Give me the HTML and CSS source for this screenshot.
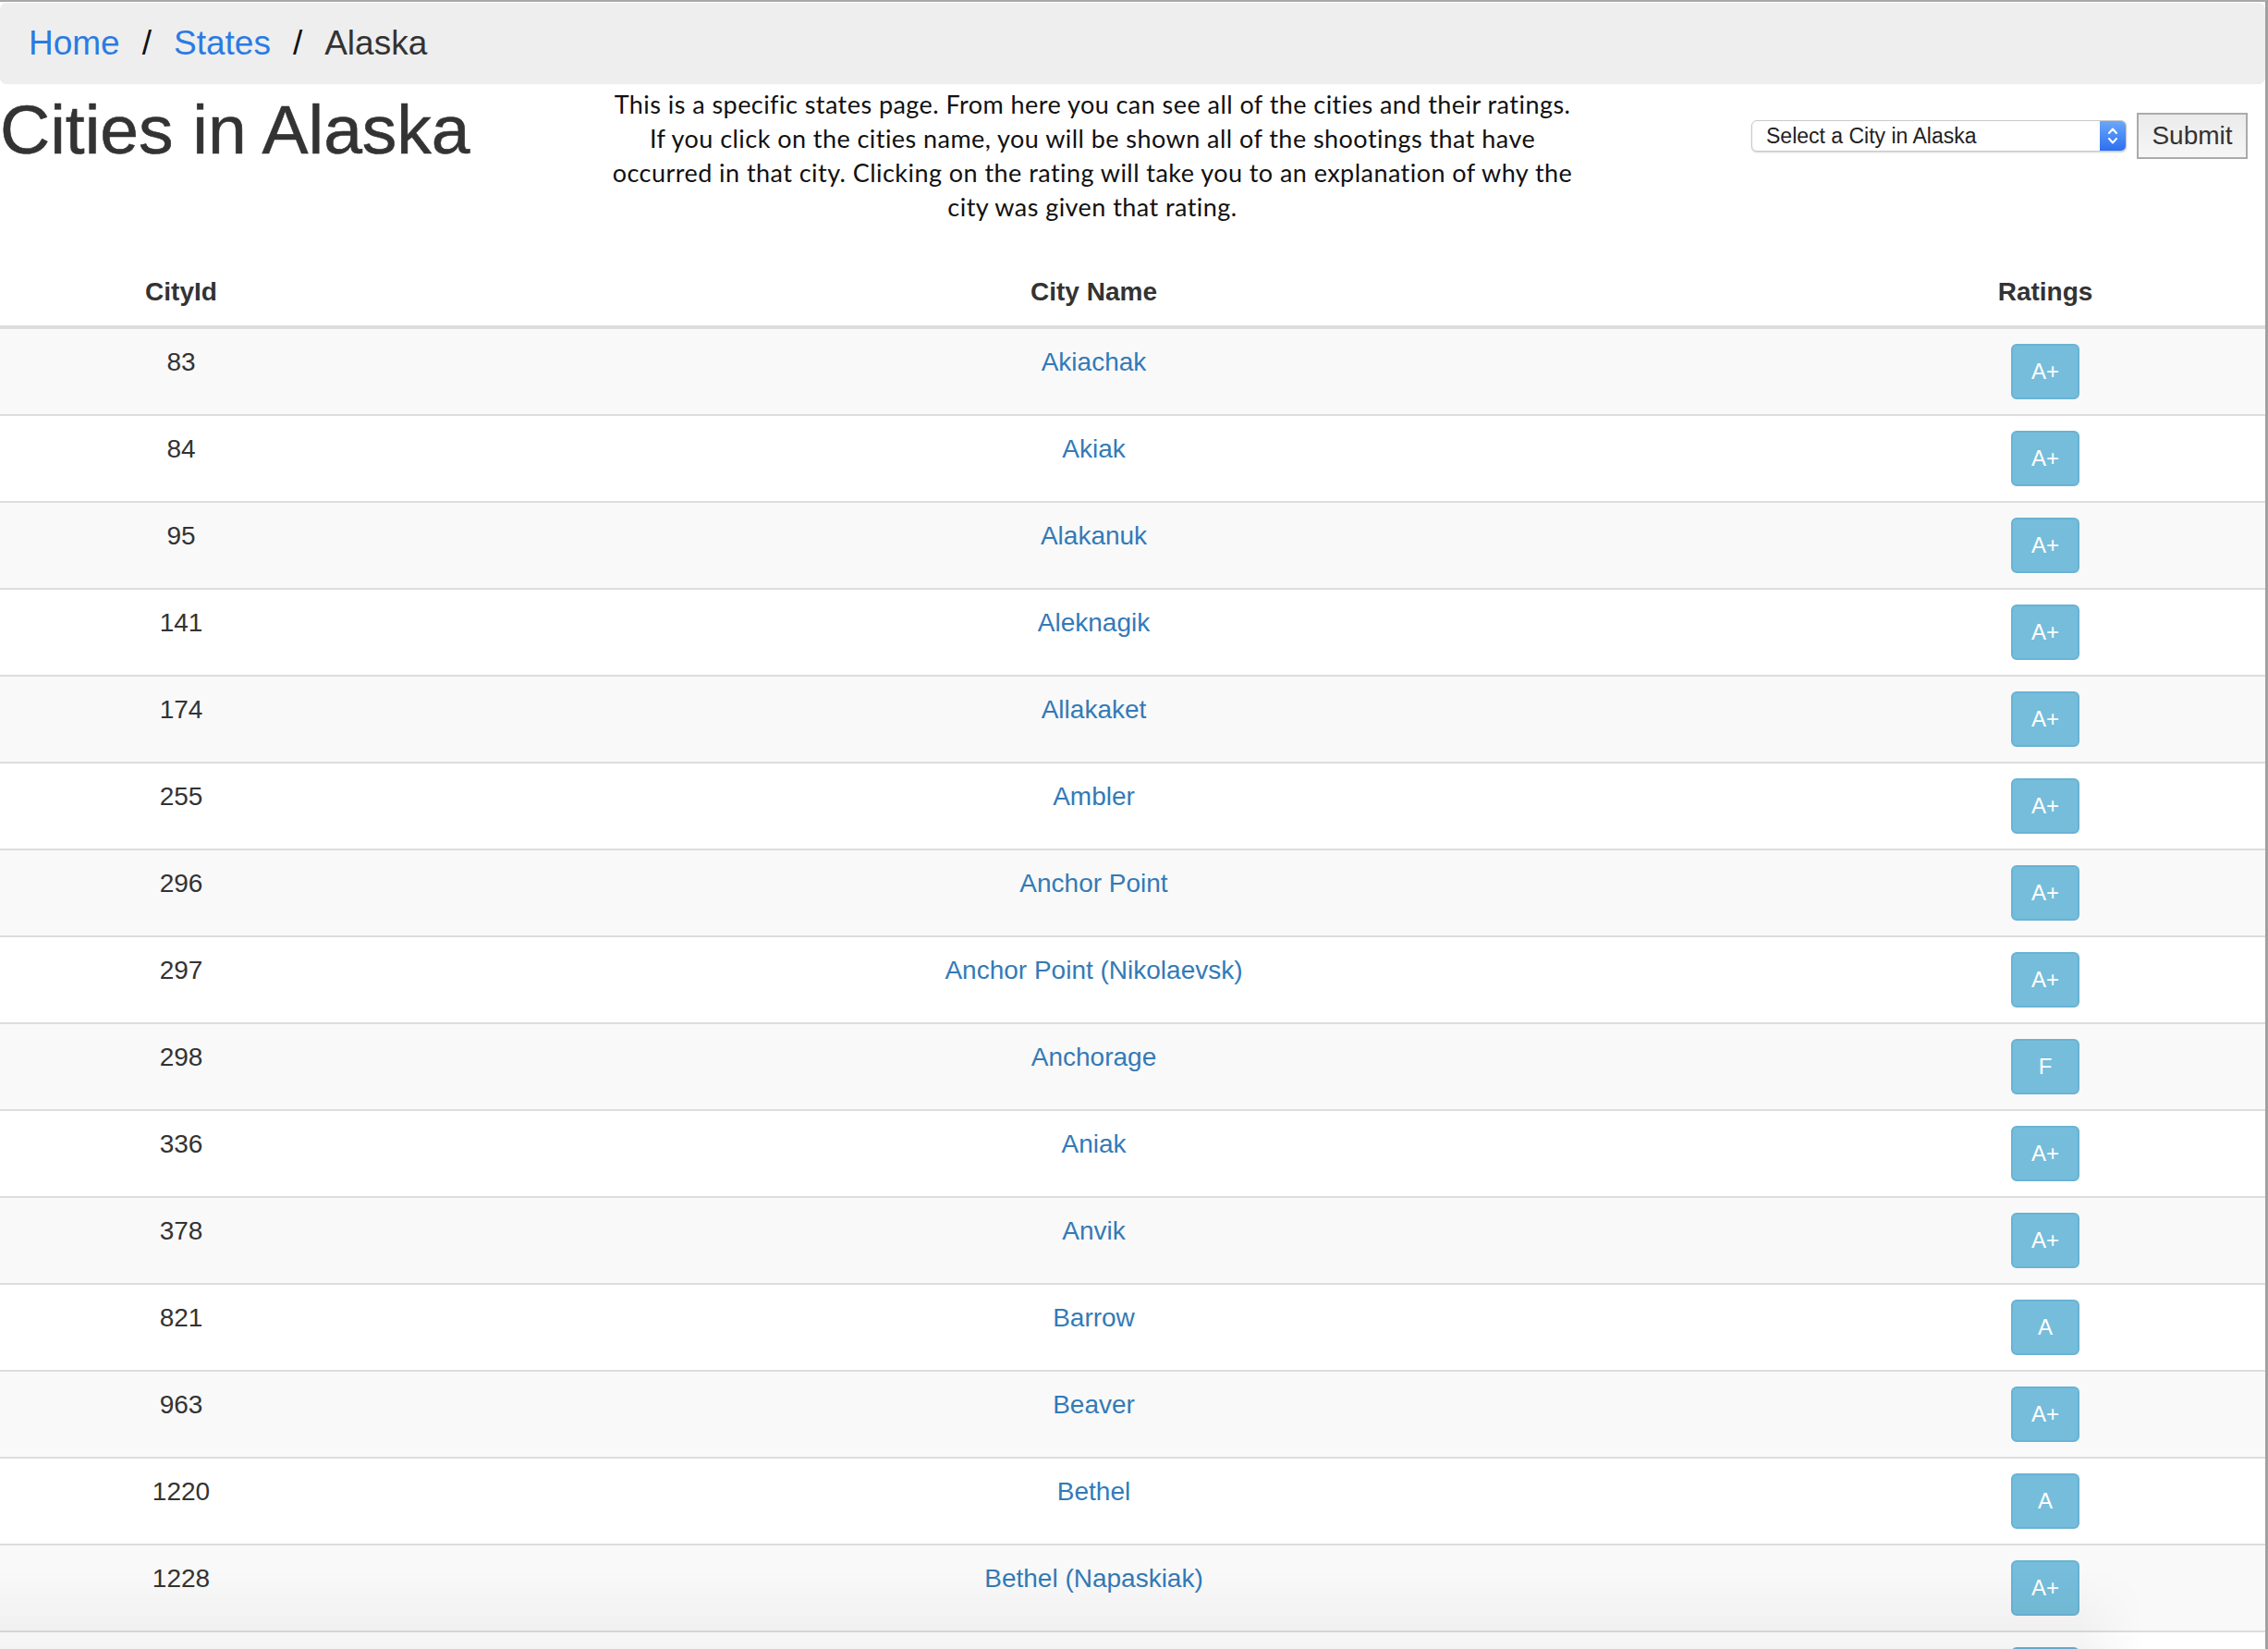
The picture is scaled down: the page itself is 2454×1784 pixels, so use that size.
FILE: index.html
```html
<!DOCTYPE html>
<html lang="en">
<head>
<meta charset="utf-8">
<title>Cities in Alaska</title>
<link rel="stylesheet" href="styles.css">
</head>
<body>
<div class="page">
  <ol class="breadcrumb">
    <li><a href="#">Home</a></li>
    <li><a href="#">States</a></li>
    <li class="active">Alaska</li>
  </ol>

  <div class="intro">
    <h1 class="title">Cities in Alaska</h1>
    <p class="lead">This is a specific states page. From here you can see all of the cities and their ratings.<br>If you click on the cities name, you will be shown all of the shootings that have<br>occurred in that city. Clicking on the rating will take you to an explanation of why the<br>city was given that rating.</p>
    <form class="city-form">
      <div class="select-wrap">
        <select class="city-select">
          <option>Select a City in Alaska</option>
          <option>Akiachak</option>
          <option>Akiak</option>
        </select>
        <span class="select-arrows">
          <svg width="14" height="24" viewBox="0 0 14 24"><path d="M3 9 L7 4.5 L11 9" fill="none" stroke="#fff" stroke-width="2" stroke-linecap="round" stroke-linejoin="round"/><path d="M3 15 L7 19.5 L11 15" fill="none" stroke="#fff" stroke-width="2" stroke-linecap="round" stroke-linejoin="round"/></svg>
        </span>
      </div>
      <button type="button" class="submit">Submit</button>
    </form>
  </div>

  <table class="cities">
    <colgroup><col class="c-id"><col class="c-name"><col class="c-rating"></colgroup>
    <thead>
      <tr><th>CityId</th><th>City Name</th><th>Ratings</th></tr>
    </thead>
    <tbody>
      <tr><td>83</td><td><a href="#">Akiachak</a></td><td><a class="rate" href="#">A+</a></td></tr>
      <tr><td>84</td><td><a href="#">Akiak</a></td><td><a class="rate" href="#">A+</a></td></tr>
      <tr><td>95</td><td><a href="#">Alakanuk</a></td><td><a class="rate" href="#">A+</a></td></tr>
      <tr><td>141</td><td><a href="#">Aleknagik</a></td><td><a class="rate" href="#">A+</a></td></tr>
      <tr><td>174</td><td><a href="#">Allakaket</a></td><td><a class="rate" href="#">A+</a></td></tr>
      <tr><td>255</td><td><a href="#">Ambler</a></td><td><a class="rate" href="#">A+</a></td></tr>
      <tr><td>296</td><td><a href="#">Anchor Point</a></td><td><a class="rate" href="#">A+</a></td></tr>
      <tr><td>297</td><td><a href="#">Anchor Point (Nikolaevsk)</a></td><td><a class="rate" href="#">A+</a></td></tr>
      <tr><td>298</td><td><a href="#">Anchorage</a></td><td><a class="rate" href="#">F</a></td></tr>
      <tr><td>336</td><td><a href="#">Aniak</a></td><td><a class="rate" href="#">A+</a></td></tr>
      <tr><td>378</td><td><a href="#">Anvik</a></td><td><a class="rate" href="#">A+</a></td></tr>
      <tr><td>821</td><td><a href="#">Barrow</a></td><td><a class="rate" href="#">A</a></td></tr>
      <tr><td>963</td><td><a href="#">Beaver</a></td><td><a class="rate" href="#">A+</a></td></tr>
      <tr><td>1220</td><td><a href="#">Bethel</a></td><td><a class="rate" href="#">A</a></td></tr>
      <tr><td>1228</td><td><a href="#">Bethel (Napaskiak)</a></td><td><a class="rate" href="#">A+</a></td></tr>
      <tr class="partial"><td></td><td></td><td><a class="rate" href="#"></a></td></tr>
    </tbody>
  </table>
</div>
<div class="bottom-shade"></div>
</body>
</html>
```

FILE: styles.css
```css
* { box-sizing: border-box; }

html, body {
  margin: 0;
  padding: 0;
  background: #fff;
}

body {
  height: 1784px;
  overflow: hidden;
  border-top: 2px solid #a8a8a8;
  border-right: 3px solid #a0a0a0;
  font-family: "Liberation Sans", Arial, Helvetica, sans-serif;
  color: #333;
}

.page {
  width: 100%;
}

/* Breadcrumb */
.breadcrumb {
  list-style: none;
  margin: 1px 0 0 0;
  padding: 17px 31px;
  background: #eeeeee;
  border-radius: 7px;
  display: flex;
  font-size: 37px;
  line-height: 54px;
}
.breadcrumb li + li::before {
  content: "/";
  color: #111;
  padding: 0 24px 0 24px;
}
.breadcrumb a {
  color: #2b7be2;
  text-decoration: none;
}
.breadcrumb .active {
  color: #333;
}

/* Intro */
.intro {
  display: grid;
  grid-template-columns: 632px 1100px 1fr;
  align-items: start;
}
.title {
  margin: 9px 0 0 0;
  font-size: 75px;
  line-height: 81px;
  font-weight: normal;
  color: #333;
  white-space: nowrap;
  -webkit-text-stroke: 0.6px #333;
}
.lead {
  margin: 3px 0 0 0;
  font-family: "Lato", "Open Sans", sans-serif;
  font-size: 27px;
  line-height: 37px;
  color: #111;
  text-align: center;
  white-space: nowrap;
  letter-spacing: 0.45px;
}
.city-form {
  justify-self: end;
  margin: 31px 19px 0 0;
  display: flex;
  align-items: center;
  gap: 11px;
}
.select-wrap {
  display: flex;
  width: 406px;
  height: 34px;
  border: 1px solid #c9c9c9;
  border-radius: 6px;
  background: #fff;
  box-shadow: 0 1px 2px rgba(0,0,0,0.18);
  overflow: hidden;
}
.city-select {
  -webkit-appearance: none;
  appearance: none;
  flex: 1;
  border: 0;
  outline: 0;
  background: transparent;
  font-family: "Liberation Sans", Arial, sans-serif;
  font-size: 23px;
  color: #222;
  padding: 0 0 0 15px;
  height: 32px;
}
.select-arrows {
  width: 28px;
  display: flex;
  align-items: center;
  justify-content: center;
  background: linear-gradient(#6aa8f9, #2c6ff1);
}
.submit {
  width: 120px;
  height: 50px;
  border: 2px solid #ababab;
  background: linear-gradient(#ebebeb, #f6f6f6);
  color: #333;
  font-family: "Liberation Sans", Arial, sans-serif;
  font-size: 28px;
  padding: 0;
  border-radius: 0;
}

/* Table */
.cities {
  width: 100%;
  margin-top: 38px;
  border-collapse: collapse;
  table-layout: fixed;
  font-size: 28px;
  line-height: 40px;
}
.c-id { width: 392px; }
.c-rating { width: 476px; }
.cities th {
  font-weight: bold;
  padding: 16px;
  text-align: center;
  border-bottom: 4px solid #dddddd;
  color: #333;
}
.cities td {
  padding: 16px;
  text-align: center;
  vertical-align: top;
  border-bottom: 2px solid #dddddd;
  color: #333;
}
.cities tbody tr:nth-child(odd) td {
  background: #f9f9f9;
}
.cities td a {
  color: #337ab7;
  text-decoration: none;
}
.cities td a.rate {
  display: inline-block;
  vertical-align: top;
  width: 74px;
  height: 60px;
  border: 2px solid #69b3d4;
  border-radius: 6px;
  background: #75bddb;
  color: #fff;
  font-size: 24px;
  line-height: 56px;
  text-align: center;
}

.bottom-shade {
  position: fixed;
  left: 0;
  right: 3px;
  bottom: 0;
  height: 86px;
  background: linear-gradient(rgba(0,0,0,0), rgba(0,0,0,0.045));
  -webkit-mask-image: linear-gradient(to right, #000 calc(100% - 200px), transparent calc(100% - 130px));
  mask-image: linear-gradient(to right, #000 calc(100% - 200px), transparent calc(100% - 130px));
  pointer-events: none;
}
```
